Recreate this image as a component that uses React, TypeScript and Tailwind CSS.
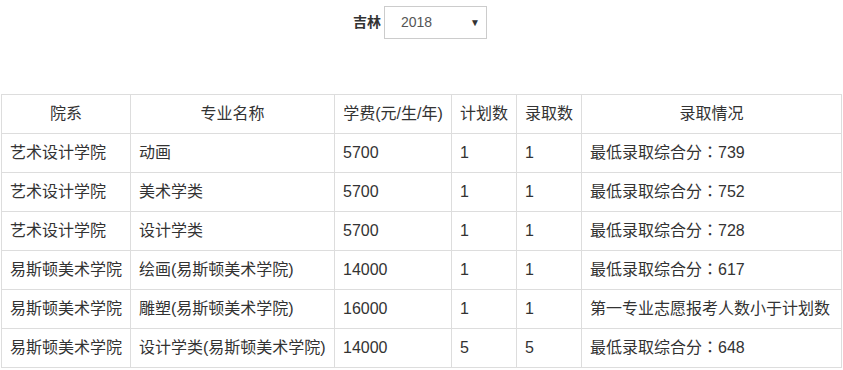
const rows = [
  ['艺术设计学院', '动画', '5700', '1', '1', '最低录取综合分：739'],
  ['艺术设计学院', '美术学类', '5700', '1', '1', '最低录取综合分：752'],
  ['艺术设计学院', '设计学类', '5700', '1', '1', '最低录取综合分：728'],
  ['易斯顿美术学院', '绘画(易斯顿美术学院)', '14000', '1', '1', '最低录取综合分：617'],
  ['易斯顿美术学院', '雕塑(易斯顿美术学院)', '16000', '1', '1', '第一专业志愿报考人数小于计划数'],
  ['易斯顿美术学院', '设计学类(易斯顿美术学院)', '14000', '5', '5', '最低录取综合分：648'],
];

const heads = ['院系', '专业名称', '学费(元/生/年)', '计划数', '录取数', '录取情况'];

// the centered full-width colon comes from the TC face
function Cell({ text }: { text: string }) {
  const parts = text.split('：');
  if (parts.length < 2) return <>{text}</>;
  return (
    <>
      {parts[0]}
      <span className="font-['Noto_Sans_CJK_TC',sans-serif] leading-[0]">：</span>
      {parts[1]}
    </>
  );
}

export default function App() {
  return (
    <div className="bg-white text-[#333] font-['Liberation_Sans','Noto_Sans_CJK_SC',sans-serif]">
      {/* province / year picker */}
      <div className="flex justify-center items-center pt-[6px] gap-[3px] pr-[3px]">
        <span className="text-[14px] font-bold">吉林</span>
        <div className="w-[103px] h-[33px] border border-[#ccc] flex items-center justify-between pl-[16px] pr-[6px] text-[14px] text-[#555]">
          <span>2018</span>
          <span className="text-[10px] text-[#333]">▼</span>
        </div>
      </div>

      {/* admission table */}
      <table className="table-fixed border-collapse w-[840px] ml-[1px] mt-[55px] text-[16px] leading-[22px]">
        <colgroup>
          <col className="w-[129px]" />
          <col className="w-[204px]" />
          <col className="w-[117px]" />
          <col className="w-[65px]" />
          <col className="w-[65px]" />
          <col className="w-[260px]" />
        </colgroup>
        <thead>
          <tr>
            {heads.map((h) => (
              <th key={h} className="border border-[#ddd] px-[8px] py-[8px] font-normal text-center whitespace-nowrap">
                {h}
              </th>
            ))}
          </tr>
        </thead>
        <tbody>
          {rows.map((r, i) => (
            <tr key={i}>
              {r.map((c, j) => (
                <td key={j} className="border border-[#ddd] px-[8px] py-[8px] text-left whitespace-nowrap">
                  <Cell text={c} />
                </td>
              ))}
            </tr>
          ))}
        </tbody>
      </table>
    </div>
  );
}
